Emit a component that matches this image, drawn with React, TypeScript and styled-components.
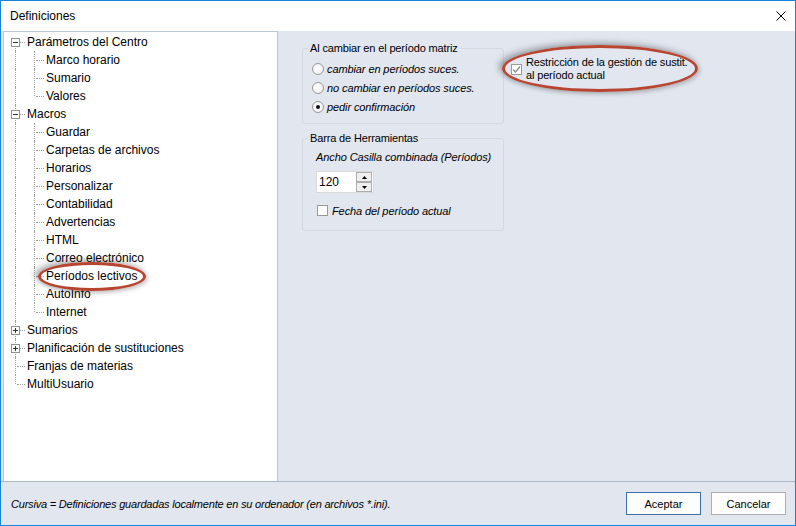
import React from 'react';
import styled, { createGlobalStyle } from 'styled-components';

const Global = createGlobalStyle`
  html, body { margin: 0; padding: 0; background: #fff; }
  body { width: 796px; height: 526px; overflow: hidden; font-family: "Liberation Sans", Arial, sans-serif; }
  * { box-sizing: border-box; }
`;

const Window = styled.div`
  position: relative;
  width: 796px;
  height: 526px;
  border: 1px solid #1883d7;
  background: #e1e6ef;
  display: flex;
  flex-direction: column;
`;

const TitleBar = styled.div`
  height: 30px;
  flex: none;
  background: #fff;
  display: flex;
  align-items: center;
  justify-content: space-between;
  padding: 0 9px;
  font-size: 12px;
  color: #000;
`;

const CloseBtn = styled.span`
  width: 10px;
  height: 10px;
  display: flex;
`;

const Body = styled.div`
  height: 451px;
  flex: none;
  display: flex;
  padding-left: 2px;
  border-bottom: 1px solid #aab8cc;
`;

const TreePanel = styled.div`
  width: 275px;
  flex: none;
  background: #fff;
  border: 1px solid #b9c6d8;
  border-bottom: none;
  padding: 1px 0 0 2px;
  display: flex;
  flex-direction: column;
`;

const TreeRow = styled.div`
  height: 18px;
  display: flex;
  align-items: center;
  font-size: 12px;
  color: #000;
  white-space: nowrap;
`;

const Guide = styled.span<{ $up?: boolean; $down?: boolean; $h?: boolean }>`
  position: relative;
  width: 19px;
  height: 18px;
  flex: none;
  &::before {
    content: '';
    display: ${(p) => (p.$up || p.$down ? 'block' : 'none')};
    position: absolute;
    left: 9px;
    top: ${(p) => (p.$up ? '0' : '9px')};
    height: ${(p) => (p.$up && p.$down ? '18px' : '9px')};
    border-left: 1px dotted #a0a0a0;
  }
  &::after {
    content: '';
    display: ${(p) => (p.$h ? 'block' : 'none')};
    position: absolute;
    left: 11px;
    top: 9px;
    width: 8px;
    border-top: 1px dotted #a0a0a0;
  }
`;

const Expander = styled.span<{ $open: boolean }>`
  position: absolute;
  left: 5px;
  top: 5px;
  width: 9px;
  height: 9px;
  border: 1px solid #919191;
  background: #fff;
  z-index: 1;
  &::before {
    content: '';
    position: absolute;
    left: 1px;
    top: 3px;
    width: 5px;
    border-top: 1px solid #333;
  }
  &::after {
    content: '';
    display: ${(p) => (p.$open ? 'none' : 'block')};
    position: absolute;
    left: 3px;
    top: 1px;
    height: 5px;
    border-left: 1px solid #333;
  }
`;

const TreeLabel = styled.span`
  margin-left: 2px;
  line-height: 18px;
`;

const RightPane = styled.div`
  flex: 1;
  display: flex;
  align-items: flex-start;
  gap: 7px;
  padding: 11px 0 0 24px;
`;

const Column = styled.div`
  width: 202px;
  display: flex;
  flex-direction: column;
  gap: 8px;
`;

const GroupBox = styled.fieldset<{ $pt: number; $pb: number }>`
  margin: 0;
  padding: ${(p) => p.$pt}px 0 ${(p) => p.$pb}px 9px;
  border: 1px solid #d2d9e3;
  border-radius: 3px;
  min-width: 0;
  display: flex;
  flex-direction: column;
`;

const Legend = styled.legend`
  margin-left: -4px;
  padding: 0 2px;
  font-size: 11px;
  line-height: 13px;
  letter-spacing: -0.15px;
  color: #000;
`;

const OptionRow = styled.label<{ $h?: number }>`
  height: ${(p) => p.$h ?? 19}px;
  display: flex;
  align-items: center;
  gap: 3px;
  font-size: 11px;
  font-style: italic;
  letter-spacing: -0.1px;
  color: #000;
`;

const CheckRow = styled(OptionRow)`
  padding: 8px 0 0 5px;
  gap: 4px;
`;

const RadioCircle = styled.span<{ $on?: boolean }>`
  position: relative;
  width: 12px;
  height: 12px;
  flex: none;
  border-radius: 50%;
  border: 1px solid #9a9a9a;
  background: radial-gradient(circle at 40% 40%, #ffffff 0%, #f4f4f4 60%, #e6e6e6 100%);
  &::after {
    content: '';
    display: ${(p) => (p.$on ? 'block' : 'none')};
    position: absolute;
    left: 3px;
    top: 3px;
    width: 4px;
    height: 4px;
    border-radius: 50%;
    background: #111;
  }
`;

const CheckBox = styled.span`
  width: 11px;
  height: 11px;
  flex: none;
  border: 1px solid #9a9a9a;
  background: #fff;
  display: flex;
  align-items: center;
  justify-content: center;
`;

const Caption = styled.div`
  height: 13px;
  margin: 0 0 0 4px;
  font-size: 11px;
  line-height: 13px;
  font-style: italic;
  letter-spacing: -0.1px;
  color: #000;
`;

const SpinBox = styled.div`
  margin: 7px 0 0 4px;
  width: 58px;
  height: 22px;
  border: 1px solid #d9d9d9;
  background: #fff;
  display: flex;
  align-items: center;
  justify-content: space-between;
  padding: 0 1px 0 2px;
  font-size: 12px;
  color: #000;
`;

const SpinButtons = styled.div`
  width: 16px;
  display: flex;
  flex-direction: column;
`;

const SpinBtn = styled.span`
  height: 10px;
  border: 1px solid #acacac;
  background: #efefef;
  display: flex;
  align-items: center;
  justify-content: center;
`;

const RestrictRow = styled.label`
  margin-top: 14px;
  display: flex;
  align-items: center;
  gap: 4px;
  font-size: 11px;
  line-height: 13px;
  letter-spacing: -0.15px;
  white-space: nowrap;
  color: #000;
`;

const Footer = styled.div`
  flex: 1;
  display: flex;
  align-items: center;
  justify-content: space-between;
  padding: 0 9px 0 10px;
`;

const Note = styled.span`
  font-size: 11px;
  font-style: italic;
  letter-spacing: -0.2px;
  color: #000;
`;

const Buttons = styled.div`
  display: flex;
  gap: 10px;
`;

const Button = styled.button<{ $default?: boolean }>`
  width: 75px;
  height: 23px;
  margin: 0;
  padding: 0;
  border: 1px solid ${(p) => (p.$default ? '#3a6fb0' : '#adadad')};
  background: #fdfdfd;
  font-family: "Liberation Sans", Arial, sans-serif;
  font-size: 11px;
  color: #000;
`;

const Highlight = styled.div<{ $x: number; $y: number; $w: number; $h: number }>`
  position: absolute;
  left: ${(p) => p.$x}px;
  top: ${(p) => p.$y}px;
  width: ${(p) => p.$w}px;
  height: ${(p) => p.$h}px;
  border: 3px solid #b84530;
  border-radius: 50%;
  box-shadow: -3px -2px 6px rgba(60, 60, 60, 0.45), 2px 2px 4px rgba(60, 60, 60, 0.25);
  pointer-events: none;
`;

type Node = { label: string; children?: string[]; open?: boolean };

const tree: Node[] = [
  { label: 'Parámetros del Centro', open: true, children: ['Marco horario', 'Sumario', 'Valores'] },
  {
    label: 'Macros',
    open: true,
    children: [
      'Guardar',
      'Carpetas de archivos',
      'Horarios',
      'Personalizar',
      'Contabilidad',
      'Advertencias',
      'HTML',
      'Correo electrónico',
      'Períodos lectivos',
      'AutoInfo',
      'Internet',
    ],
  },
  { label: 'Sumarios', open: false, children: [] },
  { label: 'Planificación de sustituciones', open: false, children: [] },
  { label: 'Franjas de materias' },
  { label: 'MultiUsuario' },
];

const CheckMark = ({ color }: { color: string }) => (
  <svg width="9" height="9" viewBox="0 0 9 9">
    <path d="M1 4.5 L3.5 7 L8 1.5" fill="none" stroke={color} strokeWidth="1.2" />
  </svg>
);

const Arrow = ({ up }: { up: boolean }) => (
  <svg width="5" height="3" viewBox="0 0 5 3">
    <path d={up ? 'M0 3 L2.5 0 L5 3 Z' : 'M0 0 L2.5 3 L5 0 Z'} fill="#000" />
  </svg>
);

function Tree() {
  const rows: React.ReactNode[] = [];
  tree.forEach((n, i) => {
    const first = i === 0;
    const last = i === tree.length - 1;
    const hasKids = n.children !== undefined;
    rows.push(
      <TreeRow key={n.label}>
        <Guide $up={!first} $down={!last} $h>
          {hasKids && <Expander $open={!!n.open} />}
        </Guide>
        <TreeLabel>{n.label}</TreeLabel>
      </TreeRow>
    );
    if (n.open && n.children) {
      n.children.forEach((c, j) => {
        const lastChild = j === n.children!.length - 1;
        rows.push(
          <TreeRow key={n.label + c}>
            <Guide $up={!last} $down={!last} />
            <Guide $up $down={!lastChild} $h />
            <TreeLabel>{c}</TreeLabel>
          </TreeRow>
        );
      });
    }
  });
  return <TreePanel>{rows}</TreePanel>;
}

export default function App() {
  return (
    <>
      <Global />
      <Window>
        <TitleBar>
          <span>Definiciones</span>
          <CloseBtn>
            <svg width="10" height="10" viewBox="0 0 10 10">
              <path d="M0.5 0.5 L9.5 9.5 M9.5 0.5 L0.5 9.5" stroke="#000" strokeWidth="1" />
            </svg>
          </CloseBtn>
        </TitleBar>
        <Body>
          <Tree />
          <RightPane>
            <Column>
              <GroupBox $pt={4} $pb={7}>
                <Legend>Al cambiar en el período matriz</Legend>
                <OptionRow>
                  <RadioCircle />
                  cambiar en períodos suces.
                </OptionRow>
                <OptionRow>
                  <RadioCircle />
                  no cambiar en períodos suces.
                </OptionRow>
                <OptionRow>
                  <RadioCircle $on />
                  pedir confirmación
                </OptionRow>
              </GroupBox>
              <GroupBox $pt={6} $pb={10}>
                <Legend>Barra de Herramientas</Legend>
                <Caption>Ancho Casilla combinada (Períodos)</Caption>
                <SpinBox>
                  <span>120</span>
                  <SpinButtons>
                    <SpinBtn>
                      <Arrow up />
                    </SpinBtn>
                    <SpinBtn>
                      <Arrow up={false} />
                    </SpinBtn>
                  </SpinButtons>
                </SpinBox>
                <CheckRow $h={27}>
                  <CheckBox />
                  Fecha del período actual
                </CheckRow>
              </GroupBox>
            </Column>
            <RestrictRow>
              <CheckBox>
                <CheckMark color="#8a8a8a" />
              </CheckBox>
              <span>
                Restricción de la gestión de sustit.
                <br />
                al período actual
              </span>
            </RestrictRow>
          </RightPane>
        </Body>
        <Footer>
          <Note>Cursiva = Definiciones guardadas localmente en su ordenador (en archivos *.ini).</Note>
          <Buttons>
            <Button $default>Aceptar</Button>
            <Button>Cancelar</Button>
          </Buttons>
        </Footer>
        <Highlight $x={501} $y={44} $w={196} $h={47} />
        <Highlight $x={37} $y={261} $w={108} $h={29} />
      </Window>
    </>
  );
}
